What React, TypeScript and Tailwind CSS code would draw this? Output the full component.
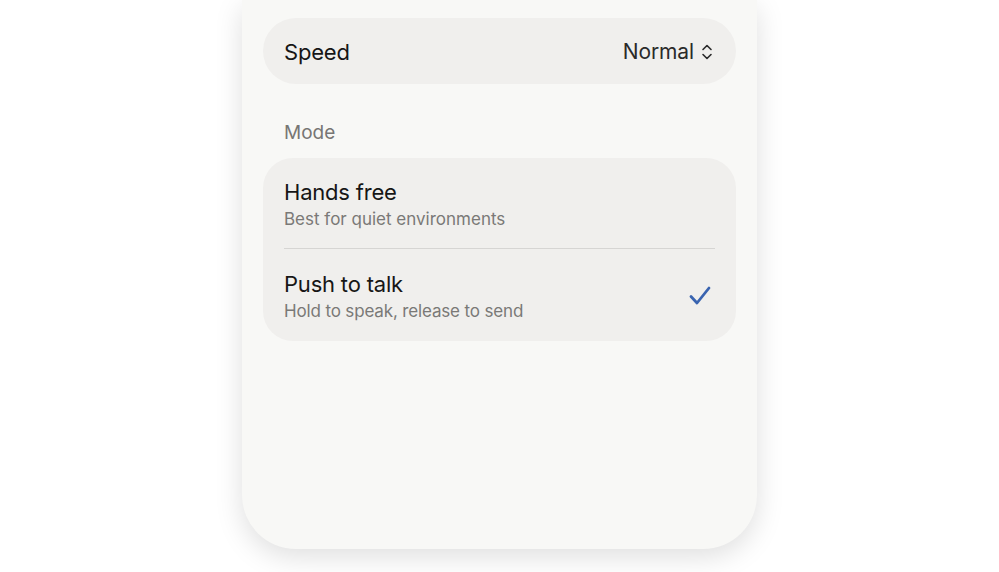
import React from "react";

export default function App() {
  return (
    <div className="w-[999px] h-[572px] bg-white overflow-hidden" style={{ fontFamily: "Inter, 'Noto Sans', sans-serif" }}>
      <div className="mx-auto w-[515px] h-[549px] bg-[#f8f8f6] rounded-b-[54px] shadow-[0_8px_28px_rgba(0,0,0,0.13)] px-[21px] pt-[18px]">
        <div className="h-[66px] rounded-full bg-[#f0efed] flex items-center justify-between pl-[21px] pr-[22px] pt-[2px]">
          <span className="text-[22px] text-[#161616] tracking-[-0.2px]">Speed</span>
          <div className="flex items-center gap-[6px]">
            <span className="text-[21px] text-[#2a2a2a] tracking-[-0.1px]">Normal</span>
            <svg width="14" height="20" viewBox="0 0 14 20" fill="none" stroke="#2a2a2a" strokeWidth="1.6" strokeLinecap="round" strokeLinejoin="round">
              <path d="M3 7.5 L7 3.5 L11 7.5" />
              <path d="M3 12.5 L7 16.5 L11 12.5" />
            </svg>
          </div>
        </div>

        <div className="mt-[37px] pl-[21px] h-[24px] flex items-center text-[19px] text-[#777674]">Mode</div>

        <div className="mt-[13px] rounded-[30px] bg-[#f0efed] px-[21px]">
          <div className="pt-[20px] pb-[18px] border-b border-[#d6d5d3]">
            <div className="text-[22px] leading-[28px] text-[#161616] tracking-[-0.2px]">Hands free</div>
            <div className="text-[17px] leading-[22px] text-[#7a7977] mt-[2px]">Best for quiet environments</div>
          </div>
          <div className="pt-[21px] pb-[19px] flex items-center justify-between">
            <div>
              <div className="text-[22px] leading-[28px] text-[#161616] tracking-[-0.2px]">Push to talk</div>
              <div className="text-[17px] leading-[22px] text-[#7a7977] mt-[2px] tracking-[-0.15px]">Hold to speak, release to send</div>
            </div>
            <svg width="26" height="26" viewBox="0 0 26 26" fill="none" stroke="#3a64b0" strokeWidth="2.8" strokeLinecap="round" strokeLinejoin="round" className="mr-[2px]">
              <path d="M4 13.5 L10 20 L22 5" />
            </svg>
          </div>
        </div>
      </div>
    </div>
  );
}
